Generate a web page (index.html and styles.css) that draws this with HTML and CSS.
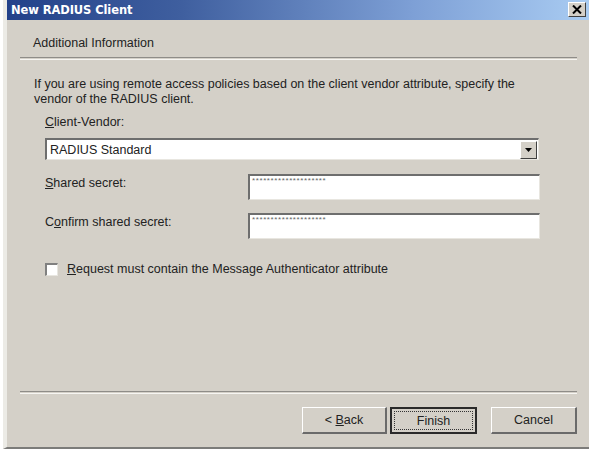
FILE: index.html
```html
<!DOCTYPE html>
<html>
<head>
<meta charset="utf-8">
<link rel="stylesheet" href="styles.css">
</head>
<body>
<div class="window">
  <div class="titlebar">
    <span class="title">New RADIUS Client</span>
    <span class="close">
      <svg width="10" height="9" viewBox="0 0 10 9"><path d="M1 0.5 L9 8.5 M9 0.5 L1 8.5" stroke="#000" stroke-width="2"/></svg>
    </span>
  </div>
  <div class="header">Additional Information</div>
  <div class="sep"></div>
  <div class="content">
    <p class="intro">If you are using remote access policies based on the client vendor attribute, specify the vendor of the RADIUS client.</p>
    <div class="controls">
      <div class="label"><u>C</u>lient-Vendor:</div>
      <div class="combo">
        <span class="combo-text">RADIUS Standard</span>
        <span class="combo-btn"><svg width="7" height="4" viewBox="0 0 7 4"><path d="M0 0 H7 L3.5 4 Z" fill="#000"/></svg></span>
      </div>
      <div class="field-row first">
        <div class="label"><u>S</u>hared secret:</div>
        <div class="input"><span class="stars">********************</span></div>
      </div>
      <div class="field-row">
        <div class="label">C<u>o</u>nfirm shared secret:</div>
        <div class="input"><span class="stars">********************</span></div>
      </div>
      <div class="check-row">
        <span class="checkbox"></span>
        <span class="label"><u>R</u>equest must contain the Message Authenticator attribute</span>
      </div>
    </div>
  </div>
  <div class="footer">
    <div class="sep"></div>
    <div class="buttons">
      <button class="btn back"><span>&lt; <u>B</u>ack</span></button>
      <button class="btn finish"><span class="focus">Finish</span></button>
      <button class="btn cancel"><span>Cancel</span></button>
    </div>
  </div>
</div>
</body>
</html>
```

FILE: styles.css
```css
html, body {
  margin: 0;
  padding: 0;
  background: #ffffff;
}

body {
  font-family: "Liberation Sans", Arial, sans-serif;
  font-size: 12.5px;
  color: #222222;
}

.window {
  margin-left: 3px;
  width: 586px;
  height: 449px;
  box-sizing: border-box;
  background: #d4d0c8;
  border-left: 4px solid #ecebe6;
  border-bottom: 2px solid #7c7c7a;
  display: flex;
  flex-direction: column;
}

.titlebar {
  height: 20px;
  flex: none;
  display: flex;
  align-items: center;
  justify-content: space-between;
  padding: 0 3px 0 4px;
  background: linear-gradient(to right, #23428a 0%, #3f5f9f 30%, #7ea0d6 70%, #a9ccf2 100%);
}

.title {
  font-family: "DejaVu Sans", Verdana, sans-serif;
  font-weight: bold;
  font-size: 11.5px;
  color: #ffffff;
  letter-spacing: -0.1px;
}

.close {
  width: 18px;
  height: 15px;
  box-sizing: border-box;
  background: #d4d0c8;
  border-top: 1px solid #ffffff;
  border-left: 1px solid #ffffff;
  border-right: 1px solid #404040;
  border-bottom: 1px solid #404040;
  display: flex;
  align-items: center;
  justify-content: center;
  margin-top: -1px;
}

.header {
  margin-top: 16px;
  padding-left: 26px;
  line-height: 14px;
  height: 14px;
}

.sep {
  height: 1px;
  border-top: 1px solid #8e8c88;
  border-bottom: 1px solid #f6f5f2;
  margin-left: 13px;
  margin-right: 12px;
}

.header + .sep {
  margin-top: 7px;
}

.content {
  padding-left: 27px;
}

.intro {
  margin: 17px 0 0 0;
  line-height: 15px;
  width: 496px;
}

.controls {
  padding-left: 11px;
  display: flex;
  flex-direction: column;
}

.label {
  line-height: 14px;
}

.controls > .label {
  margin-top: 8px;
}

.combo {
  margin-top: 9px;
  width: 494px;
  height: 22px;
  box-sizing: border-box;
  background: #ffffff;
  border-top: 2px solid #6e6e6e;
  border-left: 2px solid #6e6e6e;
  border-right: 1px solid #e8e6e0;
  border-bottom: 1px solid #e8e6e0;
  display: flex;
  align-items: center;
  justify-content: space-between;
}

.combo-text {
  padding-left: 3px;
}

.combo-btn {
  width: 17px;
  height: 18px;
  box-sizing: border-box;
  background: #d4d0c8;
  border-top: 1px solid #ffffff;
  border-left: 1px solid #ffffff;
  border-right: 1px solid #404040;
  border-bottom: 1px solid #404040;
  display: flex;
  align-items: center;
  justify-content: center;
  margin-right: 1px;
}

.field-row {
  display: grid;
  grid-template-columns: 203px 292px;
  margin-top: 13px;
}

.field-row.first {
  margin-top: 14px;
}

.field-row .label {
  padding-top: 2px;
}

.input {
  height: 26px;
  box-sizing: border-box;
  background: #ffffff;
  border-top: 2px solid #6e6e6e;
  border-left: 2px solid #6e6e6e;
  border-right: 1px solid #e8e6e0;
  border-bottom: 1px solid #e8e6e0;
}

.stars {
  display: block;
  font-size: 8px;
  line-height: 8px;
  padding-left: 2px;
  padding-top: 1px;
  color: #666666;
  letter-spacing: 0.6px;
}

.check-row {
  margin-top: 23px;
  display: flex;
  align-items: center;
  gap: 9px;
}

.checkbox {
  width: 13px;
  height: 13px;
  box-sizing: border-box;
  background: #ffffff;
  border-top: 2px solid #808080;
  border-left: 2px solid #808080;
  border-right: 1px solid #e8e6e0;
  border-bottom: 1px solid #e8e6e0;
}

.footer {
  margin-top: auto;
  padding-bottom: 13px;
}

.footer .sep {
  margin-bottom: 13px;
}

.buttons {
  display: flex;
  justify-content: flex-end;
  padding-right: 12px;
}

.btn {
  height: 27px;
  box-sizing: border-box;
  font-family: "Liberation Sans", Arial, sans-serif;
  font-size: 12.5px;
  color: #222222;
  background: #d4d0c8;
  border-top: 1px solid #ffffff;
  border-left: 1px solid #ffffff;
  border-right: 2px solid #6a6a6a;
  border-bottom: 2px solid #6a6a6a;
  padding: 0;
  display: flex;
  align-items: center;
  justify-content: center;
}

.back {
  width: 85px;
}

.finish {
  width: 87px;
  margin-left: 3px;
  border: 2px solid #2a2a2a;
  padding: 2px;
}

.focus {
  flex: 1;
  align-self: stretch;
  border: 1px dotted #333333;
  display: flex;
  align-items: center;
  justify-content: center;
}

.cancel {
  width: 86px;
  margin-left: 14px;
}
```
